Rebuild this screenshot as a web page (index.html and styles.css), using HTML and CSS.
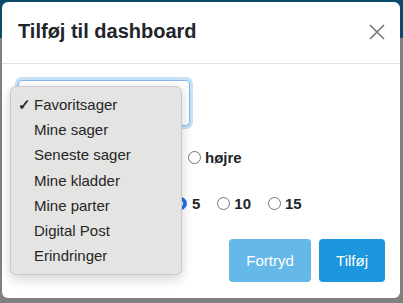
FILE: index.html
```html
<!DOCTYPE html>
<html lang="da">
<head>
    <meta charset="UTF-8">
    <meta name="viewport" content="width=device-width, initial-scale=1.0">
    <title>Tilføj til dashboard</title>
    <link rel="stylesheet" href="styles.css">
</head>
<body>
    <div class="modal">
        <div class="modal-header">
            <h2>Tilføj til dashboard</h2>
            <button class="close-btn" aria-label="Luk">
                <svg width="16" height="16" viewBox="0 0 16 16">
                    <path d="M1 1 L15 15 M15 1 L1 15" stroke="#777" stroke-width="1.6" fill="none"/>
                </svg>
            </button>
        </div>
        <div class="modal-body">
            <div class="select-box"></div>
            <div class="form-row col-row">
                <label class="radio"><input type="radio" name="col"> højre</label>
            </div>
            <div class="form-row count-row">
                <label class="radio"><input type="radio" name="count" checked> 5</label>
                <label class="radio"><input type="radio" name="count"> 10</label>
                <label class="radio"><input type="radio" name="count"> 15</label>
            </div>

            <!-- aaben dropdown -->
            <ul class="dropdown">
                <li class="checked">Favoritsager</li>
                <li>Mine sager</li>
                <li>Seneste sager</li>
                <li>Mine kladder</li>
                <li>Mine parter</li>
                <li>Digital Post</li>
                <li>Erindringer</li>
            </ul>
        </div>
        <div class="modal-footer">
            <button class="btn btn-light">Fortryd</button>
            <button class="btn btn-primary">Tilføj</button>
        </div>
    </div>
</body>
</html>
```

FILE: styles.css
```css
html, body {
    height: 100%;
}
body {
    margin: 0;
    padding: 2px 3px 5px 2px;
    box-sizing: border-box;
    font-family: 'Liberation Sans', Arial, sans-serif;
    background: linear-gradient(to bottom, #0c4a6c 0, #0c4a6c 38px, #808080 38px);
}
.modal {
    background: white;
    border-radius: 6px;
    height: 100%;
    display: flex;
    flex-direction: column;
    position: relative;
}
.modal-header {
    height: 61px;
    display: flex;
    align-items: center;
    justify-content: space-between;
    padding: 0 14px 0 16px;
    border-bottom: 1px solid #dee2e6;
}
.modal-header h2 {
    margin: 0;
    font-size: 20px;
    color: #212529;
    padding-bottom: 2px;
}
.close-btn {
    background: none;
    border: 0;
    padding: 0;
    width: 18px;
    height: 18px;
    display: flex;
    align-items: center;
    justify-content: center;
    margin-bottom: 2px;
}
.modal-body {
    flex: 1;
    padding: 16px 16px 0 16px;
    position: relative;
}
.select-box {
    width: 170px;
    height: 44px;
    border: 1px solid #86b7e8;
    border-radius: 4px;
    box-shadow: 0 0 0 3px #c5e1f7;
    background: white;
}
.form-row {
    display: flex;
    align-items: center;
    height: 20px;
    font-size: 15px;
    font-weight: bold;
    color: #212529;
}
.col-row {
    margin-top: 21px;
    padding-left: 170px;
}
.count-row {
    margin-top: 26px;
    padding-left: 156px;
}
.radio {
    display: flex;
    align-items: center;
    margin-right: 17px;
}
.radio input {
    appearance: none;
    width: 13px;
    height: 13px;
    margin: 0 4px 0 0;
    border: 1px solid #777;
    border-radius: 50%;
    background: white;
}
.radio input:checked {
    border-color: #1a73e8;
    margin-right: 5px;
    background: radial-gradient(circle, white 0, white 2.5px, #1a73e8 3px);
}
.dropdown {
    position: absolute;
    left: 8px;
    top: 22px;
    width: 170px;
    margin: 0;
    padding: 5px 0 6px;
    list-style: none;
    background: #e4e4e3;
    border: 1px solid #c9c9c9;
    border-radius: 6px;
    box-shadow: 0 4px 12px rgba(0, 0, 0, 0.18);
    font-family: 'Liberation Sans', Arial, sans-serif;
    font-size: 15px;
    color: #262626;
}
.dropdown li {
    height: 25.2px;
    line-height: 25px;
    padding-left: 23px;
    position: relative;
}
.dropdown li.checked::before {
    content: "\2713";
    position: absolute;
    left: 7px;
    font-size: 15px;
    font-weight: bold;
}
.modal-footer {
    display: flex;
    justify-content: flex-end;
    gap: 8px;
    padding: 0 15px 16px 0;
}
.btn {
    height: 43px;
    border: 0;
    border-radius: 4px;
    color: white;
    font-family: 'Liberation Sans', Arial, sans-serif;
    font-size: 15px;
    padding: 0 16px;
}
.btn-light {
    background: #66b8e8;
    width: 82px;
}
.btn-primary {
    background: #1c96dc;
    width: 66px;
}
```
